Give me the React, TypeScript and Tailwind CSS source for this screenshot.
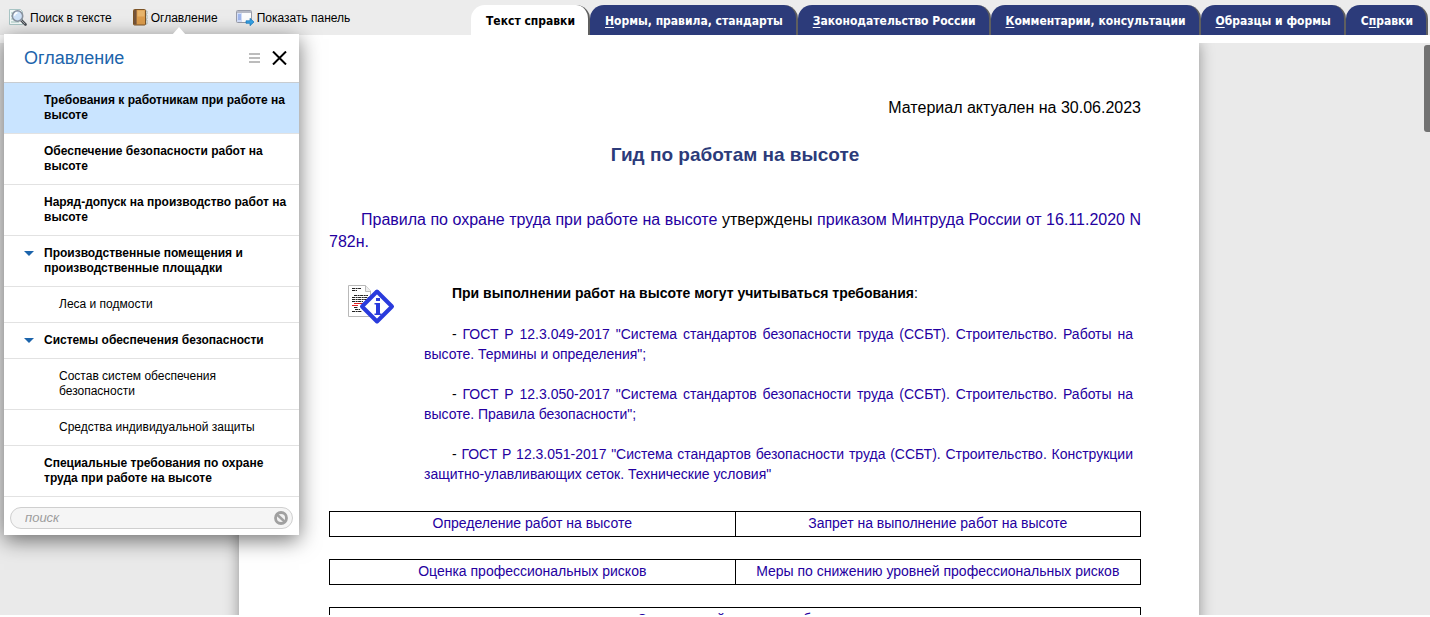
import React from "react";

const tabs = [
  { before: "", key: "Н", rest: "ормы, правила, стандарты" },
  { before: "", key: "З", rest: "аконодательство России" },
  { before: "", key: "К", rest: "омментарии, консультации" },
  { before: "", key: "О", rest: "бразцы и формы" },
  { before: "С", key: "п", rest: "равки" },
];

type Entry = { text: string; kind: "top" | "group" | "child"; active?: boolean };

const contents: Entry[] = [
  { text: "Требования к работникам при работе на высоте", kind: "top", active: true },
  { text: "Обеспечение безопасности работ на высоте", kind: "top" },
  { text: "Наряд-допуск на производство работ на высоте", kind: "top" },
  { text: "Производственные помещения и производственные площадки", kind: "group" },
  { text: "Леса и подмости", kind: "child" },
  { text: "Системы обеспечения безопасности", kind: "group" },
  { text: "Состав систем обеспечения безопасности", kind: "child" },
  { text: "Средства индивидуальной защиты", kind: "child" },
  { text: "Специальные требования по охране труда при работе на высоте", kind: "top" },
];

const standards = [
  'ГОСТ Р 12.3.049-2017 "Система стандартов безопасности труда (ССБТ). Строительство. Работы на высоте. Термины и определения";',
  'ГОСТ Р 12.3.050-2017 "Система стандартов безопасности труда (ССБТ). Строительство. Работы на высоте. Правила безопасности";',
  'ГОСТ Р 12.3.051-2017 "Система стандартов безопасности труда (ССБТ). Строительство. Конструкции защитно-улавливающих сеток. Технические условия"',
];

const linkTables = [
  ["Определение работ на высоте", "Запрет на выполнение работ на высоте"],
  ["Оценка профессиональных рисков", "Меры по снижению уровней профессиональных рисков"],
  ["Специальной одежды и обуви"],
];

function SearchIcon() {
  return (
    <svg width="18" height="17" viewBox="0 0 18 17" aria-hidden="true">
      <path d="M.5 .5h11l2 2v13H.5z" fill="#f4faf9" stroke="#a9c5c5" />
      <path d="M2 4h3M2 7h2M2 10h3M2 13h8" stroke="#9fc4bd" />
      <path d="M12.500 11.500l4 4" stroke="#4b4f55" strokeWidth="2.600" strokeLinecap="round" />
      <path d="M12 11l4 4" stroke="#b8bcc2" strokeWidth="0.8" />
      <circle cx="8.500" cy="7" r="5.200" fill="#cfe2f8" stroke="#8a93a0" strokeWidth="1.600" />
      <path d="M5.500 6.800a3.200 3.200 0 0 1 3-3" stroke="#fff" strokeWidth="1.400" fill="none" />
    </svg>
  );
}

function BookIcon() {
  return (
    <svg width="15" height="17" viewBox="0 0 15 17" aria-hidden="true">
      <path d="M12 2h2v3h-2zM12 6h2v4h-2zM12 11h2v4h-2z" fill="#eef3f2" stroke="#9aa7a5" strokeWidth="0.8" />
      <rect x="0.5" y="0.5" width="12" height="15.5" rx="1" fill="#dc9c4c" stroke="#7c5427" />
      <rect x="1" y="1" width="2.6" height="14.5" fill="#75543a" />
      <path d="M4.500 1.500h7v6h-7z" fill="#e8b56c" />
    </svg>
  );
}

function PanelIcon() {
  return (
    <svg width="18" height="17" viewBox="0 0 18 17" aria-hidden="true">
      <rect x="0.5" y="1.5" width="15" height="12" rx="1" fill="#fdfdfe" stroke="#989caa" />
      <path d="M1 2h14v2H1z" fill="#b7bac6" />
      <path d="M1 4h5v9H1z" fill="#d3dffa" />
      <path d="M2 6h3M2 8h3M2 10h3" stroke="#6f8fe0" />
      <path d="M10 11.800h4V9.300l4 3.700-4 3.700v-2.400h-4z" fill="#35a3e6" stroke="#1877bd" strokeWidth="0.7" />
    </svg>
  );
}

function InfoIcon() {
  return (
    <svg width="47" height="40" viewBox="0 0 47 40" aria-hidden="true">
      <path d="M.5 .5h17l5 5.500v25.500H.5z" fill="#fff" stroke="#b9b9b9" />
      <path d="M17.500 .5v6h5.500" fill="#eee" stroke="#b9b9b9" />
      <path
        d="M4 3.500h9M4 5.500h5M6 10.500h14M4 12.500h17M4 14.500h15M4 16.500h11M6 22.500h4M7 24.500h5M4 26.500h10"
        stroke="#222"
        strokeWidth="1"
        strokeDasharray="3 0.6 2 0.5"
      />
      <path d="M6 18.500h9M4 20.500h6" stroke="#e02020" strokeWidth="1.200" />
      <path d="M29 6.500L44 21.500 29 36.500 14 21.500z" fill="#fff" stroke="#2a3bdc" strokeWidth="4" strokeLinejoin="round" />
      <path d="M28 13h4v3h-4zM26.500 18H32v10.500h1.500V30h-7v-1.500H28v-9h-1.500z" fill="#2a3bdc" />
    </svg>
  );
}

function ClearIcon() {
  return (
    <svg width="14" height="14" viewBox="0 0 14 14" aria-hidden="true">
      <circle cx="7" cy="7" r="5.500" fill="#f1f1f1" stroke="#a0a0a0" strokeWidth="2.800" />
      <path d="M3 3.500l8 7.500" stroke="#a0a0a0" strokeWidth="2.400" />
    </svg>
  );
}

function ContentsMenu() {
  return (
    <aside className="absolute top-[34px] left-1 z-10 w-[295px] bg-white shadow-[0_5px_20px_rgba(0,0,0,0.55)]">
      <svg className="absolute -top-[7px] left-[168px]" width="14" height="8" viewBox="0 0 14 8" aria-hidden="true">
        <path d="M0 8L7 0l7 8z" fill="#fff" />
      </svg>
      <div className="flex h-[49px] items-center border-b border-[#c8ccd0] pr-3 pl-5">
        <h2 className="flex-1 text-[18px] leading-6 text-[#1c64ab]">Оглавление</h2>
        <button type="button" aria-label="Свернуть список" className="mr-3">
          <svg width="11" height="10" viewBox="0 0 11 10" aria-hidden="true">
            <path d="M0 0h11v2H0zM0 4h11v2H0zM0 8h11v2H0z" fill="#bcbcbc" />
          </svg>
        </button>
        <button type="button" aria-label="Закрыть">
          <svg width="15" height="14" viewBox="0 0 15 14" aria-hidden="true">
            <path d="M1 .5l13 13M14 .5L1 13.500" stroke="#000" strokeWidth="2" />
          </svg>
        </button>
      </div>
      <ul className="text-[12px] leading-[15px] text-black">
        {contents.map((item) => (
          <li
            key={item.text}
            className={
              "flex border-b border-[#e2e2e2] py-[10px] pr-2 " +
              (item.active ? "bg-[#c9e4ff] " : "") +
              (item.kind === "child" ? "pl-[55px]" : "pl-5 font-bold")
            }
          >
            {item.kind !== "child" && (
              <span className="flex h-[15px] w-5 shrink-0 items-center">
                {item.kind === "group" && (
                  <svg width="10" height="5" viewBox="0 0 10 5" aria-hidden="true">
                    <path d="M0 0h10L5 5z" fill="#1c64ab" />
                  </svg>
                )}
              </span>
            )}
            <a href="#" className={item.kind === "child" ? "max-w-[210px] grow" : ""}>
              {item.text}
            </a>
          </li>
        ))}
      </ul>
      <div className="px-[6px] pt-[10px] pb-[6px]">
        <div className="flex h-[22px] items-center rounded-full border border-[#cfcfcf] bg-[#f5f5f5] pr-1 pl-[14px]">
          <input
            type="text"
            aria-label="Поиск по оглавлению"
            placeholder="поиск"
            className="min-w-0 flex-1 bg-transparent text-[13px] italic outline-none placeholder:text-[#9c9c9c]"
          />
          <button type="button" aria-label="Очистить">
            <ClearIcon />
          </button>
        </div>
      </div>
    </aside>
  );
}

export default function App() {
  return (
    <div className="relative flex h-screen flex-col overflow-hidden bg-white font-['Liberation_Sans',Arial,sans-serif] text-black">
      <header className="flex h-[35px] shrink-0 items-end justify-between bg-[#ececec] pr-[2px] pl-[9px]">
        <div className="flex h-full items-center gap-[18px] text-[12px] whitespace-nowrap">
          <button type="button" className="mr-[3px] flex items-center gap-[3px]">
            <SearchIcon />
            Поиск в тексте
          </button>
          <button type="button" className="flex items-center gap-[3px]">
            <BookIcon />
            Оглавление
          </button>
          <button type="button" className="flex items-center gap-[3px]">
            <PanelIcon />
            Показать панель
          </button>
        </div>
        <nav className="flex font-['DejaVu_Sans_Condensed','DejaVu_Sans',Tahoma,sans-serif] text-[12px] leading-7 font-bold whitespace-nowrap">
          <a href="#" className="rounded-t-[14px] border-r-2 border-[#5f5f5f] bg-white pt-[2px] pr-[13px] pl-[15px]">
            Текст справки
          </a>
          {tabs.map((tab) => (
            <a
              key={tab.rest}
              href="#"
              className="rounded-t-[14px] border-r-2 border-[#5f5f5f] bg-[#2c3b7a] pt-[2px] pr-[13px] pl-[15px] text-white"
            >
              {tab.before}
              <span className="underline underline-offset-2">{tab.key}</span>
              {tab.rest}
            </a>
          ))}
        </nav>
      </header>

      <ContentsMenu />

      <div className="relative mt-2 mb-[2px] flex min-h-0 flex-1 bg-[#eaeaea]">
        <main className="flex flex-1 justify-center overflow-y-auto pl-2 [scrollbar-width:none]">
          <article className="h-max w-[960px] bg-white pt-[54px] pr-[58px] pb-10 pl-[90px] shadow-[0_0_14px_rgba(0,0,0,0.38)]">
            <p className="text-right text-[16px] leading-[22px]">Материал актуален на 30.06.2023</p>
            <h1 className="mt-6 text-center text-[19px] leading-6 font-bold text-[#2c3b7a]">Гид по работам на высоте</h1>
            <p className="mt-[42px] text-justify indent-8 text-[16px] leading-[22px]">
              <a href="#" className="text-[#2400a0]">
                Правила по охране труда при работе на высоте
              </a>{" "}
              утверждены{" "}
              <a href="#" className="text-[#2400a0]">
                приказом Минтруда России от 16.11.2020 N 782н.
              </a>
            </p>
            <section className="mt-[30px] flex pr-2 pl-[19px]">
              <div className="w-[76px] shrink-0 pt-[2px]">
                <InfoIcon />
              </div>
              <div className="flex flex-1 flex-col gap-5 text-justify indent-7 text-[14px] leading-5">
                <p className="pb-[1px]">
                  <b>При выполнении работ на высоте могут учитываться требования</b>:
                </p>
                {standards.map((text) => (
                  <p key={text}>
                    -{" "}
                    <a href="#" className="text-[#2400a0]">
                      {text}
                    </a>
                  </p>
                ))}
              </div>
            </section>
            <div className="mt-[27px] flex flex-col gap-[22px]">
              {linkTables.map((cells) => (
                <table key={cells[0]} className="w-full table-fixed border-collapse text-[14px] leading-[22px]">
                  <tbody>
                    <tr>
                      {cells.map((cell) => (
                        <td key={cell} className="border border-black p-0 pb-[2px] text-center">
                          <a href="#" className="text-[#2400a0]">
                            {cell}
                          </a>
                        </td>
                      ))}
                    </tr>
                  </tbody>
                </table>
              ))}
            </div>
          </article>
        </main>
        <div className="absolute top-[2px] right-0 h-[87px] w-[6px] rounded-l-[3px] bg-[#727272]" />
      </div>
    </div>
  );
}
